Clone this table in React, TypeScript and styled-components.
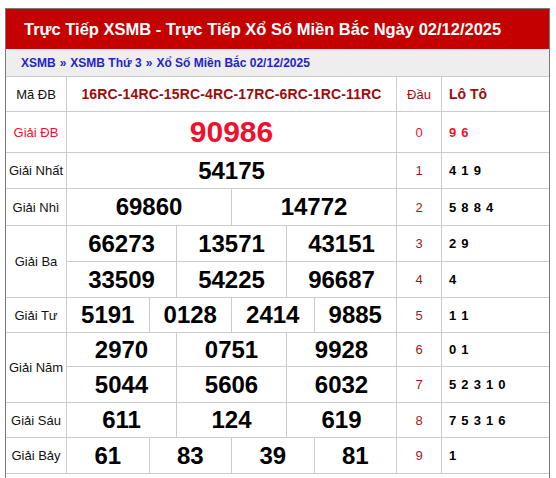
import React from "react";
import styled, { createGlobalStyle } from "styled-components";

const GlobalStyle = createGlobalStyle`
  html, body {
    margin: 0;
    padding: 0;
    overflow: hidden;
    background: #ffffff;
    font-family: "Liberation Sans", Arial, sans-serif;
  }
`;

const Page = styled.div`
  padding: 8px 0 0 5px;
`;

const Box = styled.section`
  width: 545px;
  min-height: 490px;
  box-sizing: border-box;
  border: 1px solid #7a7a7a;
  border-bottom: none;
  background: #ffffff;
`;

const Title = styled.h1`
  margin: 0;
  height: 40px;
  display: flex;
  align-items: center;
  padding-left: 18px;
  background: #c40000;
  color: #ffffff;
  font-size: 16.5px;
  font-weight: bold;
  white-space: nowrap;
`;

const Crumbs = styled.nav`
  height: 27px;
  display: flex;
  align-items: center;
  gap: 4px;
  padding-left: 15px;
  background: #eeeeee;
  border-bottom: 1px solid #cccccc;
  color: #2424c8;
  font-size: 12px;
  font-weight: bold;
  white-space: nowrap;
`;

const Crumb = styled.span`
  color: #2424c8;
`;

const Board = styled.div`
  display: grid;
  grid-template-columns: 60px 329px 44px 107px;
  grid-template-rows: 34px 40px 35px 36px 35px 35px 34px 33px 35px 34px 35px;
  gap: 1px;
  background: #cccccc;
  border-bottom: 1px solid #cccccc;
`;

const Cell = styled.div<{ $span?: number }>`
  background: #ffffff;
  display: flex;
  align-items: center;
  justify-content: center;
  grid-row: span ${(p) => p.$span ?? 1};
  min-width: 0;
`;

const Label = styled(Cell)<{ $hot?: boolean }>`
  font-size: 13px;
  color: ${(p) => (p.$hot ? "#f0102e" : "#111111")};
  text-align: center;
`;

const Code = styled(Cell)`
  font-size: 14px;
  font-weight: bold;
  color: #9c0c0c;
  letter-spacing: 0.15px;
`;

const HeadCol = styled(Cell)<{ $bold?: boolean; $left?: boolean }>`
  font-size: ${(p) => (p.$bold ? "14px" : "13px")};
  font-weight: ${(p) => (p.$bold ? "bold" : "normal")};
  color: #9c0c0c;
  justify-content: ${(p) => (p.$left ? "flex-start" : "center")};
  padding-left: ${(p) => (p.$left ? "7px" : "0")};
`;

const NumberRow = styled.div<{ $cols: number }>`
  display: grid;
  grid-template-columns: repeat(${(p) => p.$cols}, 1fr);
  gap: 1px;
  background: #cccccc;
`;

const Num = styled.div<{ $special?: boolean }>`
  background: #ffffff;
  display: flex;
  align-items: center;
  justify-content: center;
  font-weight: bold;
  font-size: ${(p) => (p.$special ? "30px" : "24px")};
  color: ${(p) => (p.$special ? "#f0102e" : "#000000")};
`;

const Head = styled(Cell)<{ $hot?: boolean }>`
  font-size: 13px;
  color: ${(p) => (p.$hot ? "#f0102e" : "#a01818")};
`;

const Loto = styled(Cell)<{ $hot?: boolean }>`
  justify-content: flex-start;
  padding-left: 7px;
  font-size: 13px;
  font-weight: bold;
  word-spacing: 1.5px;
  color: ${(p) => (p.$hot ? "#f0102e" : "#000000")};
`;

type Prize = { label: string; rows: string[][]; special?: boolean };

const prizes: Prize[] = [
  { label: "Giải ĐB", rows: [["90986"]], special: true },
  { label: "Giải Nhất", rows: [["54175"]] },
  { label: "Giải Nhì", rows: [["69860", "14772"]] },
  { label: "Giải Ba", rows: [["66273", "13571", "43151"], ["33509", "54225", "96687"]] },
  { label: "Giải Tư", rows: [["5191", "0128", "2414", "9885"]] },
  { label: "Giải Năm", rows: [["2970", "0751", "9928"], ["5044", "5606", "6032"]] },
  { label: "Giải Sáu", rows: [["611", "124", "619"]] },
  { label: "Giải Bảy", rows: [["61", "83", "39", "81"]] },
];

const loto = ["9 6", "4 1 9", "5 8 8 4", "2 9", "4", "1 1", "0 1", "5 2 3 1 0", "7 5 3 1 6", "1"];

export default function App() {
  let idx = 0;
  return (
    <Page>
      <GlobalStyle />
      <Box>
        <Title>Trực Tiếp XSMB - Trực Tiếp Xổ Số Miền Bắc Ngày 02/12/2025</Title>
        <Crumbs>
          <Crumb>XSMB</Crumb>
          <span>»</span>
          <Crumb>XSMB Thứ 3</Crumb>
          <span>»</span>
          <Crumb>Xổ Số Miền Bắc 02/12/2025</Crumb>
        </Crumbs>
        <Board>
          <Label>Mã ĐB</Label>
          <Code>16RC-14RC-15RC-4RC-17RC-6RC-1RC-11RC</Code>
          <HeadCol>Đầu</HeadCol>
          <HeadCol $bold $left>
            Lô Tô
          </HeadCol>
          {prizes.map((p) => (
            <React.Fragment key={p.label}>
              <Label $span={p.rows.length} $hot={p.special}>
                {p.label}
              </Label>
              {p.rows.map((row, ri) => {
                const d = idx++;
                return (
                  <React.Fragment key={ri}>
                    <NumberRow $cols={row.length}>
                      {row.map((n, ni) => (
                        <Num key={ni} $special={p.special}>
                          {n}
                        </Num>
                      ))}
                    </NumberRow>
                    <Head $hot={d === 0}>{d}</Head>
                    <Loto $hot={d === 0}>{loto[d]}</Loto>
                  </React.Fragment>
                );
              })}
            </React.Fragment>
          ))}
        </Board>
      </Box>
    </Page>
  );
}
